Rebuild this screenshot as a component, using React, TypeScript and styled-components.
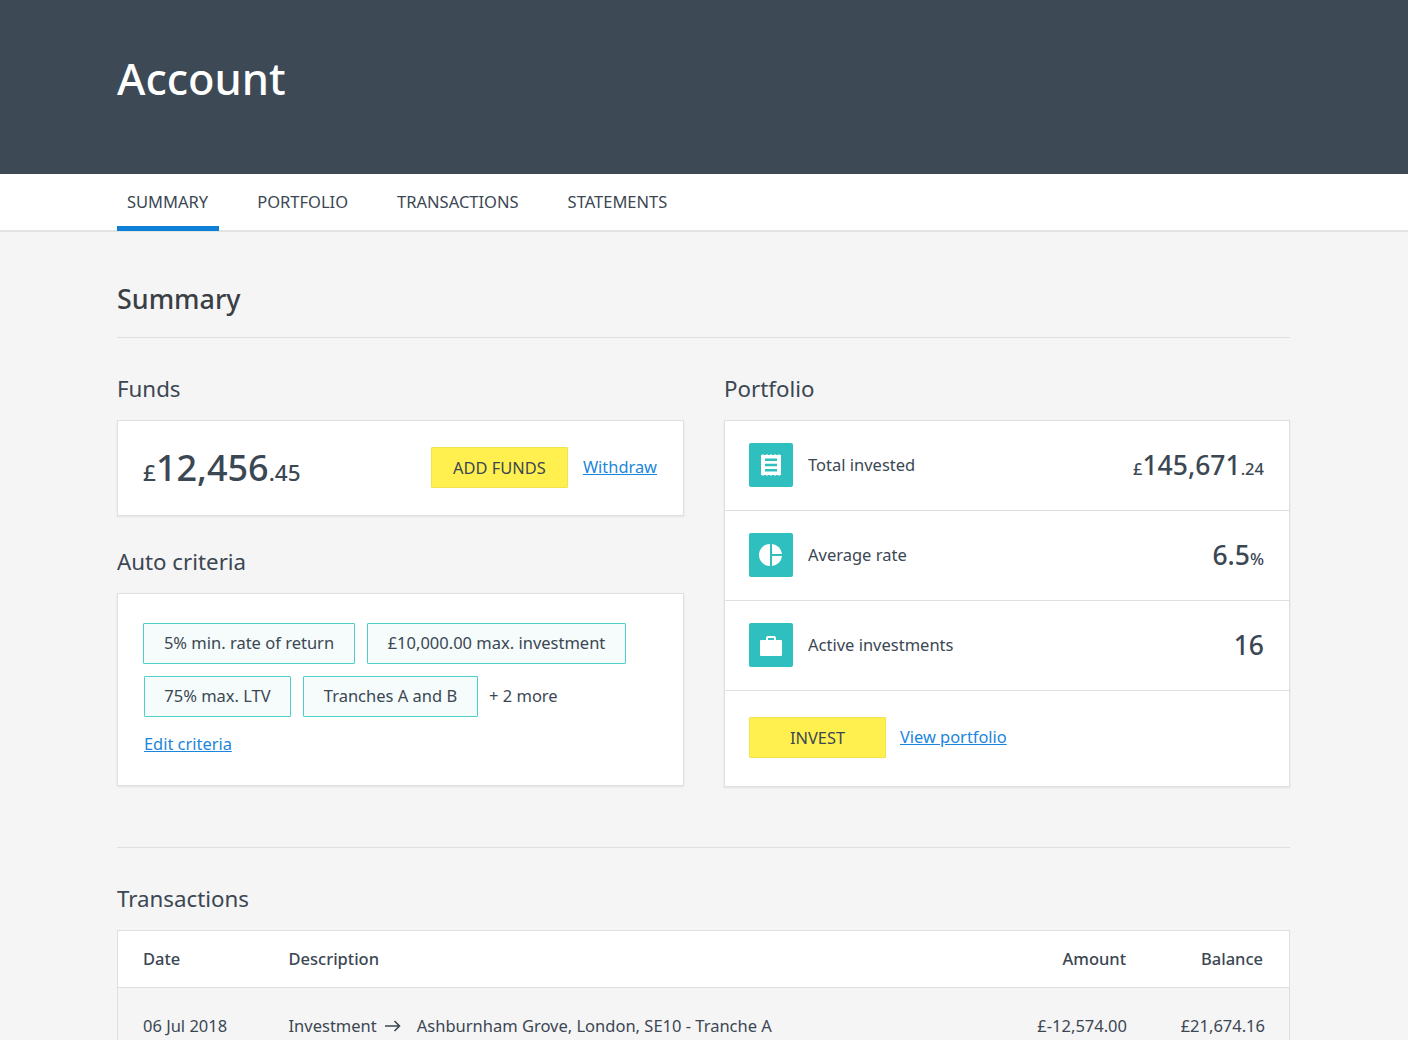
// core
import { FC, ReactNode } from 'react'

// libs
import styled, { createGlobalStyle } from 'styled-components'

const font = `'Noto Sans', 'Open Sans', sans-serif`
const ink = '#3b4753'
const line = '#dedfe0'
const link = '#1b86dc'

const GlobalStyle = createGlobalStyle`
    * { box-sizing: border-box; }
    html, body { margin: 0; padding: 0; }
    body {
        height: 1040px;
        overflow: hidden;
        background: #f5f5f5;
        font-family: ${font};
        color: ${ink};
    }
`

// styles
const Hero = styled.header`
    height: 174px;
    background: #3d4a56;
    padding: 49px 0 0 117px;
`

const HeroTitle = styled.h1`
    margin: 0;
    font-size: 43.4px;
    line-height: 60px;
    font-weight: 500;
    color: #fff;
`

const Nav = styled.nav`
    height: 58px;
    padding-left: 117px;
    display: flex;
    gap: 28px;
    background: #fff;
    border-bottom: 2px solid #e2e3e3;
`

const Tab = styled.a<{ $active?: boolean }>`
    height: 57px;
    padding: 0 11px 0 10px;
    font-size: 16.5px;
    line-height: 55px;
    color: ${ink};
    border-bottom: 5px solid ${({ $active }) => ($active ? '#0d7fd6' : 'transparent')};
`

const Main = styled.main`
    width: 1173px;
    margin-left: 117px;
`

const PageTitle = styled.h2`
    margin: 0;
    padding: 48px 0 19px;
    font-size: 26.9px;
    line-height: 38px;
    font-weight: 500;
    color: #3a3f45;
    border-bottom: 1px solid ${line};
`

const Columns = styled.div`
    display: grid;
    grid-template-columns: 567px 566px;
    gap: 40px;
    padding: 33px 0 60px;
    border-bottom: 1px solid ${line};
`

const Column = styled.div`
    display: flex;
    flex-direction: column;
`

const SectionTitle = styled.h3`
    margin: 0 0 13px;
    font-size: 22.3px;
    line-height: 36px;
    font-weight: 400;
    color: ${ink};
`

const Card = styled.section`
    background: #fff;
    border: 1px solid ${line};
    box-shadow: 0 1px 2px rgba(0, 0, 0, 0.08);
`

const FundsCard = styled(Card)`
    height: 96px;
    margin-bottom: 28px;
    padding: 0 26px 2px 25px;
    display: flex;
    align-items: center;
    justify-content: space-between;
`

const Money = styled.span`
    display: inline-flex;
    align-items: baseline;
    font-weight: 500;
    color: ${ink};
`

const Major = styled.span<{ $size: number }>`
    font-size: ${({ $size }) => $size}px;
    line-height: 1;
`

const Minor = styled.span<{ $size: number }>`
    font-size: ${({ $size }) => $size}px;
    line-height: 1;
`

const FundsAmount = styled.div`
    margin-top: 2px;
`

const Actions = styled.div`
    display: flex;
    align-items: center;
    gap: 15px;
`

const Button = styled.button<{ $width: number }>`
    width: ${({ $width }) => $width}px;
    height: 41px;
    padding: 0;
    font-family: ${font};
    font-size: 16.4px;
    color: ${ink};
    background: #fff04f;
    border: 1px solid #f1e34c;
    border-radius: 1px;
`

const TextLink = styled.a`
    font-size: 16.4px;
    line-height: 24px;
    color: ${link};
    text-decoration: underline;
`

const CriteriaCard = styled(Card)`
    height: 193px;
    padding: 29px 25px 0;
`

const ChipRow = styled.div<{ $inset?: boolean }>`
    display: flex;
    align-items: center;
    gap: 12px;
    margin-bottom: 12px;
    padding-left: ${({ $inset }) => ($inset ? '1px' : '0')};
`

const Chip = styled.span<{ $width: number }>`
    width: ${({ $width }) => $width}px;
    height: 41px;
    font-size: 16.5px;
    line-height: 38px;
    text-align: center;
    white-space: nowrap;
    color: ${ink};
    background: #f5fcfb;
    border: 1px solid #4ecfc9;
    border-radius: 1px;
`

const More = styled.span`
    font-size: 16.5px;
    margin: -2px 0 0 -1px;
`

const EditLink = styled(TextLink)`
    display: block;
    margin: 15px 0 0 1px;
`

const StatRow = styled.div`
    height: 90px;
    padding: 0 25px 2px 24px;
    display: flex;
    align-items: center;
    gap: 15px;
    border-bottom: 1px solid ${line};
`

const StatIcon = styled.span`
    width: 44px;
    height: 44px;
    margin-top: 1px;
    flex: none;
    display: flex;
    align-items: center;
    justify-content: center;
    background: #30bfbf;
    border-radius: 2px;
`

const StatLabel = styled.span`
    flex: 1;
    font-size: 16.5px;
`

const StatValue = styled.div`
    margin-top: 2px;
`

const StatFooter = styled.div`
    height: 95px;
    padding: 0 25px 3px 24px;
    display: flex;
    align-items: center;
    gap: 14px;
`

const Transactions = styled.div`
    padding-top: 33px;
`

const TableCard = styled.section`
    margin-top: 13px;
    background: #fff;
    border: 1px solid ${line};
    border-bottom: 0;
`

const Table = styled.table`
    width: 100%;
    border-collapse: collapse;
    font-size: 16.5px;
    color: ${ink};

    th, td {
        padding: 0;
        text-align: left;
    }

    th {
        height: 56px;
        font-weight: 500;
        background: #fff;
        border-bottom: 1px solid ${line};
    }

    td {
        height: 77px;
        background: #f5f5f5;
        white-space: nowrap;
    }

    th:first-child, td:first-child {
        width: 170.5px;
        padding-left: 25px;
    }

    th:nth-child(3), td:nth-child(3) {
        width: 138px;
        text-align: right;
    }

    th:nth-child(3) {
        padding-right: 1px;
    }

    th:nth-child(4), td:nth-child(4) {
        width: 162px;
        text-align: right;
    }

    th:nth-child(4) {
        padding-right: 26px;
    }

    td:nth-child(4) {
        padding-right: 24px;
    }
`

const DescriptionCell = styled.span`
    display: inline-flex;
    align-items: center;
`

const ArrowIcon = styled.svg`
    margin: 0 16px 0 8px;
`

// icons
const ReceiptIcon: FC = () => (
    <svg width="20" height="22" viewBox="0 0 20 22" aria-hidden="true">
        <path
            fill="#fff"
            fillRule="evenodd"
            d="M0 1h1V.4h2V1h2V.4h2V1h2V.4h2V1h2V.4h2V1h2V.4h2V1h1v20h-1v.6h-2V21h-2v.6h-2V21h-2v.6H9V21H7v.6H5V21H3v.6H1V21H0zM4 4.500v2.500h12V4.500zM4 9.700v2.500h12V9.700zM4 14.900v2.500h12v-2.500z"
        />
    </svg>
)

const PieIcon: FC = () => (
    <svg width="24" height="24" viewBox="0 0 24 24" aria-hidden="true">
        <path fill="#fff" d="M11 1v22a11 11 0 0 1 0-22z" />
        <path fill="#fff" d="M13 1a11 11 0 0 1 10 10H13z" />
        <path fill="#fff" d="M13 13h10a11 11 0 0 1-10 10z" />
    </svg>
)

const CaseIcon: FC = () => (
    <svg width="24" height="24" viewBox="0 0 24 24" aria-hidden="true">
        <path
            fill="#fff"
            fillRule="evenodd"
            d="M2 7h5V5a2 2 0 0 1 2-2h6a2 2 0 0 1 2 2v2h5a1 1 0 0 1 1 1v14a1 1 0 0 1-1 1H2a1 1 0 0 1-1-1V8a1 1 0 0 1 1-1zM9 5v2h6V5z"
        />
    </svg>
)

// component helpers
const Amount: FC<{ prefix?: string; major: string; minor?: string; size: number; small: number }> = ({
    prefix,
    major,
    minor,
    size,
    small,
}) => (
    <Money>
        {prefix && <Minor $size={small}>{prefix}</Minor>}
        <Major $size={size}>{major}</Major>
        {minor && <Minor $size={small}>{minor}</Minor>}
    </Money>
)

const Stat: FC<{ icon: ReactNode; label: string; children: ReactNode }> = ({ icon, label, children }) => (
    <StatRow>
        <StatIcon>{icon}</StatIcon>
        <StatLabel>{label}</StatLabel>
        <StatValue>{children}</StatValue>
    </StatRow>
)

// component current
const App: FC = () => {
    return (
        <>
            <GlobalStyle />

            <Hero>
                <HeroTitle>Account</HeroTitle>
            </Hero>

            <Nav>
                <Tab $active>SUMMARY</Tab>
                <Tab>PORTFOLIO</Tab>
                <Tab>TRANSACTIONS</Tab>
                <Tab>STATEMENTS</Tab>
            </Nav>

            <Main>
                <PageTitle>Summary</PageTitle>

                <Columns>
                    <Column>
                        <SectionTitle>Funds</SectionTitle>
                        <FundsCard>
                            <FundsAmount>
                                <Amount prefix="£" major="12,456" minor=".45" size={36} small={22.5} />
                            </FundsAmount>
                            <Actions>
                                <Button $width={137}>ADD FUNDS</Button>
                                <TextLink>Withdraw</TextLink>
                            </Actions>
                        </FundsCard>

                        <SectionTitle>Auto criteria</SectionTitle>
                        <CriteriaCard>
                            <ChipRow>
                                <Chip $width={212}>5% min. rate of return</Chip>
                                <Chip $width={259}>£10,000.00 max. investment</Chip>
                            </ChipRow>
                            <ChipRow $inset>
                                <Chip $width={147}>75% max. LTV</Chip>
                                <Chip $width={175}>Tranches A and B</Chip>
                                <More>+ 2 more</More>
                            </ChipRow>
                            <EditLink>Edit criteria</EditLink>
                        </CriteriaCard>
                    </Column>

                    <Column>
                        <SectionTitle>Portfolio</SectionTitle>
                        <Card>
                            <Stat icon={<ReceiptIcon />} label="Total invested">
                                <Amount prefix="£" major="145,671" minor=".24" size={26.5} small={16.5} />
                            </Stat>
                            <Stat icon={<PieIcon />} label="Average rate">
                                <Amount major="6.5" minor="%" size={26.5} small={16.5} />
                            </Stat>
                            <Stat icon={<CaseIcon />} label="Active investments">
                                <Amount major="16" size={26.5} small={16.5} />
                            </Stat>
                            <StatFooter>
                                <Button $width={137}>INVEST</Button>
                                <TextLink>View portfolio</TextLink>
                            </StatFooter>
                        </Card>
                    </Column>
                </Columns>

                <Transactions>
                    <SectionTitle>Transactions</SectionTitle>
                    <TableCard>
                        <Table>
                            <thead>
                                <tr>
                                    <th>Date</th>
                                    <th>Description</th>
                                    <th>Amount</th>
                                    <th>Balance</th>
                                </tr>
                            </thead>
                            <tbody>
                                <tr>
                                    <td>06 Jul 2018</td>
                                    <td>
                                        <DescriptionCell>
                                            Investment
                                            <ArrowIcon width="16" height="12" viewBox="0 0 16 12" aria-hidden="true">
                                                <path
                                                    d="M0 6h14.500M9.500 1l5 5-5 5"
                                                    fill="none"
                                                    stroke="#3b4753"
                                                    strokeWidth="1.600"
                                                />
                                            </ArrowIcon>
                                            Ashburnham Grove, London, SE10 - Tranche A
                                        </DescriptionCell>
                                    </td>
                                    <td>£-12,574.00</td>
                                    <td>£21,674.16</td>
                                </tr>
                            </tbody>
                        </Table>
                    </TableCard>
                </Transactions>
            </Main>
        </>
    )
}

export default App
